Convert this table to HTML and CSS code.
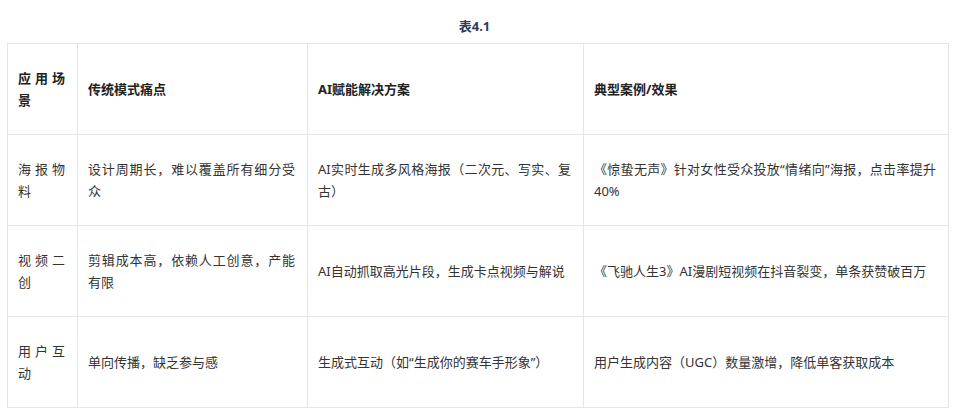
FILE: index.html
```html
<!DOCTYPE html>
<html lang="zh-CN">
<head>
<meta charset="utf-8">
<title>表4.1</title>
<link rel="stylesheet" href="styles.css">
</head>
<body>
<div class="page">
  <div class="caption">表4.1</div>
  <table class="grid">
    <colgroup>
      <col class="c1"><col class="c2"><col class="c3"><col class="c4">
    </colgroup>
    <thead>
      <tr>
        <th class="scene">应用场景</th>
        <th>传统模式痛点</th>
        <th>AI赋能解决方案</th>
        <th>典型案例/效果</th>
      </tr>
    </thead>
    <tbody>
      <tr>
        <td class="scene">海报物料</td>
        <td>设计周期长，难以覆盖所有细分受众</td>
        <td>AI实时生成多风格海报（二次元、写实、复古）</td>
        <td>《惊蛰无声》针对女性受众投放“情绪向”海报，点击率提升40%</td>
      </tr>
      <tr>
        <td class="scene">视频二创</td>
        <td>剪辑成本高，依赖人工创意，产能有限</td>
        <td>AI自动抓取高光片段，生成卡点视频与解说</td>
        <td>《飞驰人生3》AI漫剧短视频在抖音裂变，单条获赞破百万</td>
      </tr>
      <tr>
        <td class="scene">用户互动</td>
        <td>单向传播，缺乏参与感</td>
        <td>生成式互动（如“生成你的赛车手形象”）</td>
        <td>用户生成内容（UGC）数量激增，降低单客获取成本</td>
      </tr>
    </tbody>
  </table>
</div>
</body>
</html>
```

FILE: styles.css
```css
html, body {
  margin: 0;
  padding: 0;
  background: #ffffff;
}

body {
  font-family: "Noto Sans", "Noto Sans CJK SC", sans-serif;
  color: #333333;
}

.page {
  width: 941px;
  padding: 15px 0 0 7px;
}

.caption {
  text-align: center;
  font-size: 13px;
  line-height: 22px;
  font-weight: 700;
  color: #2e3c5c;
  margin-bottom: 6px;
  padding-right: 6px;
}

.grid {
  width: 941px;
  table-layout: fixed;
  border-collapse: collapse;
  font-size: 13px;
  line-height: 22px;
}

.c1 { width: 70px; }
.c2 { width: 230px; }
.c3 { width: 276px; }
.c4 { width: 365px; }

.grid th,
.grid td {
  border: 1px solid #e4e6ea;
  padding: 23px 12px 23px 10px;
  vertical-align: middle;
}

.grid th {
  text-align: left;
  font-weight: 700;
  color: #222222;
}

.grid td {
  text-align: justify;
  font-weight: 400;
  color: #333333;
}

.grid .scene {
  text-align: justify;
}
```
